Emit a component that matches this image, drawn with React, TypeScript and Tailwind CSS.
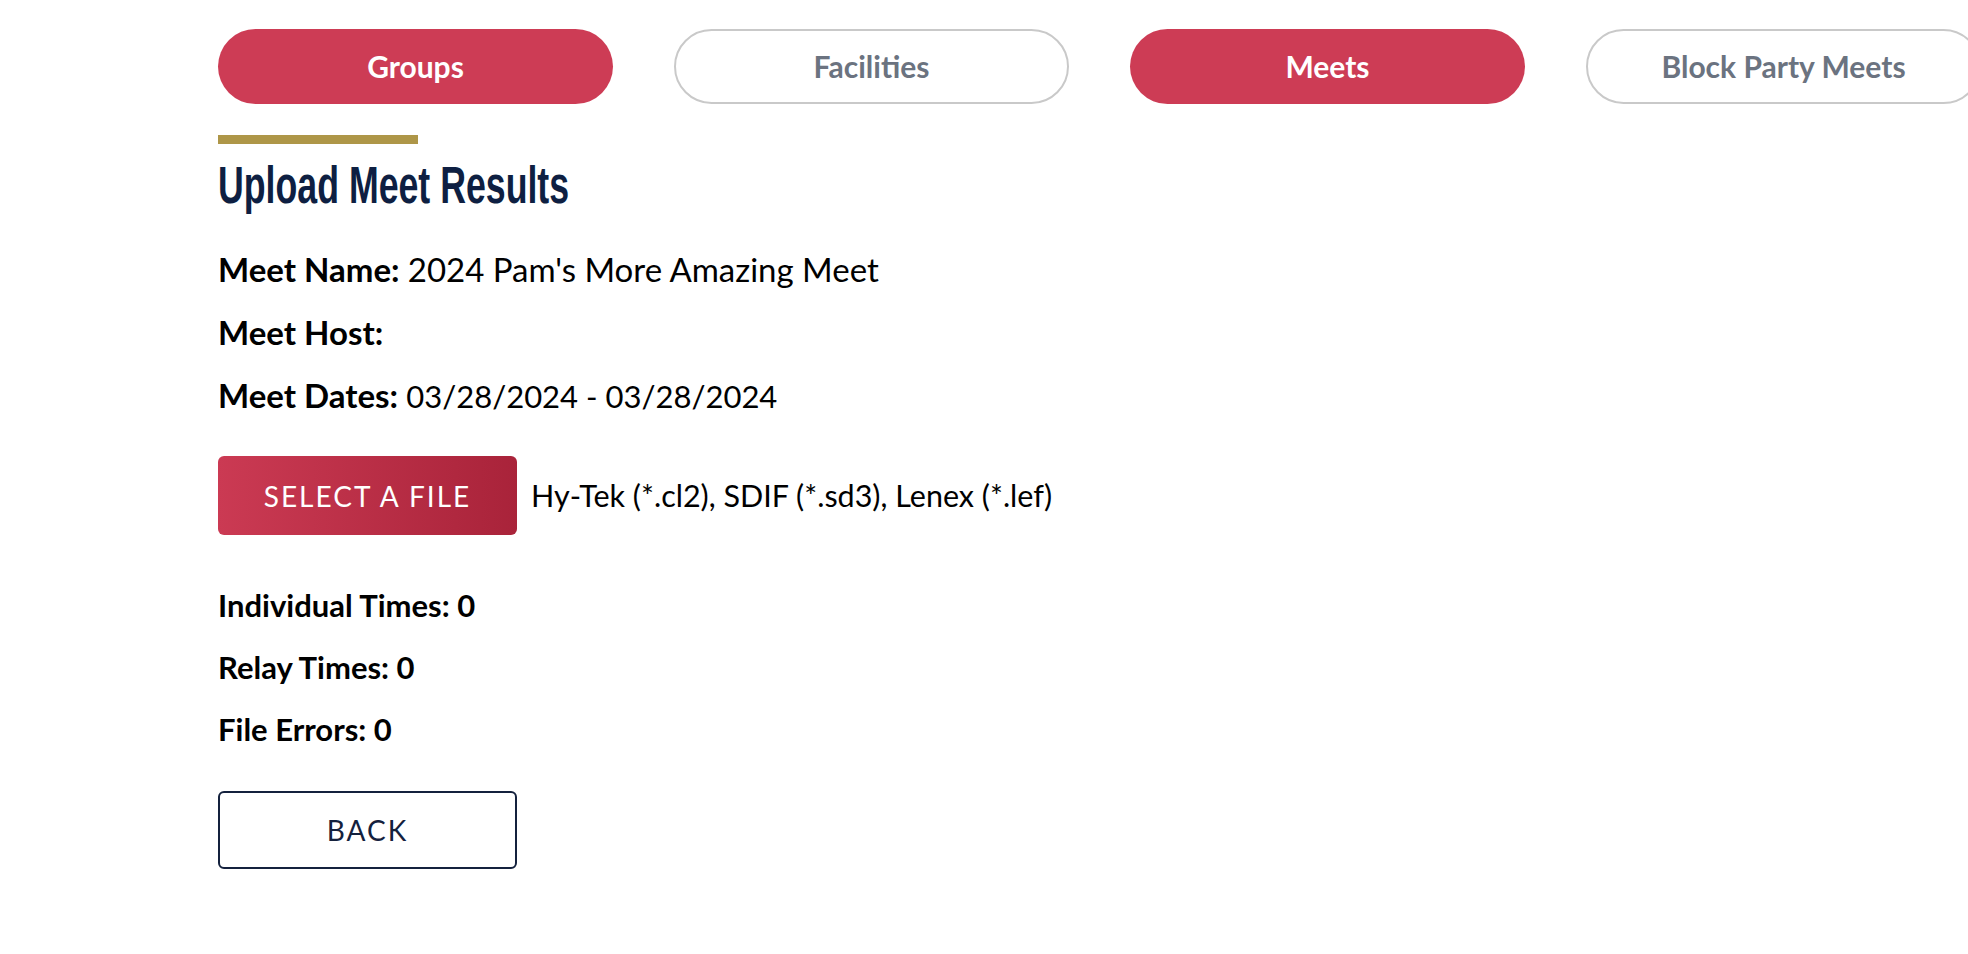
const tabs = [
  { label: "Groups", active: true },
  { label: "Facilities", active: false },
  { label: "Meets", active: true },
  { label: "Block Party Meets", active: false },
]

const body = { fontFamily: "Lato, 'Open Sans', sans-serif" }
const heading = { fontFamily: "'Liberation Sans', Arial, sans-serif" }

export default function App() {
  return (
    <div className="min-h-screen w-full overflow-hidden bg-white pl-[218px] pt-[29px] text-black" style={body}>
      {/* Tabs */}
      <div className="flex w-max gap-[61px]">
        {tabs.map((t) =>
          t.active ? (
            <button
              key={t.label}
              className="flex h-[75px] w-[395px] items-center justify-center rounded-full bg-[#cd3c55] text-[30px] font-bold text-white"
            >
              {t.label}
            </button>
          ) : (
            <button
              key={t.label}
              className="flex h-[75px] w-[395px] items-center justify-center rounded-full border-2 border-[#c9c9c9] bg-white text-[30px] font-bold text-[#6b7380]"
            >
              {t.label}
            </button>
          )
        )}
      </div>

      {/* Title */}
      <div className="mt-[31px] h-[9px] w-[200px] bg-[#ae9648]" />
      <h1 className="mt-[12px] h-[60px] text-[51px] font-bold leading-[60px] text-[#0e1f42]" style={heading}>
        <span className="inline-block origin-left scale-x-[0.7] whitespace-nowrap">Upload Meet Results</span>
      </h1>

      {/* Meet info */}
      <div className="mt-[33px] flex flex-col gap-[22px] text-[32px] leading-[40px]">
        <div>
          <span className="text-[33px] font-bold">Meet Name:</span> <span className="text-[33px]">2024 Pam's More Amazing Meet</span>
        </div>
        <div>
          <span className="text-[33px] font-bold">Meet Host:</span>
        </div>
        <div>
          <span className="text-[33px] font-bold">Meet Dates:</span> <span className="text-[31px]">03/28/2024 - 03/28/2024</span>
        </div>
      </div>

      {/* Upload */}
      <div className="mt-[40px] flex items-center gap-[14px]">
        <button className="flex h-[79px] w-[299px] items-center justify-center rounded-[6px] bg-gradient-to-r from-[#cb3a53] to-[#a9233a] text-[28px] tracking-[2px] text-white">
          SELECT A FILE
        </button>
        <span className="text-[30.5px]">Hy-Tek (*.cl2), SDIF (*.sd3), Lenex (*.lef)</span>
      </div>

      {/* Stats */}
      <div className="mt-[50px] flex flex-col gap-[22px] text-[31px] font-bold leading-[40px]">
        <div>Individual Times: 0</div>
        <div>Relay Times: 0</div>
        <div>File Errors: 0</div>
      </div>

      <button className="mt-[42px] flex h-[78px] w-[299px] items-center justify-center rounded-[6px] border-2 border-[#14213d] bg-white text-[28px] tracking-[2px] text-[#14213d]">
        BACK
      </button>
    </div>
  )
}
